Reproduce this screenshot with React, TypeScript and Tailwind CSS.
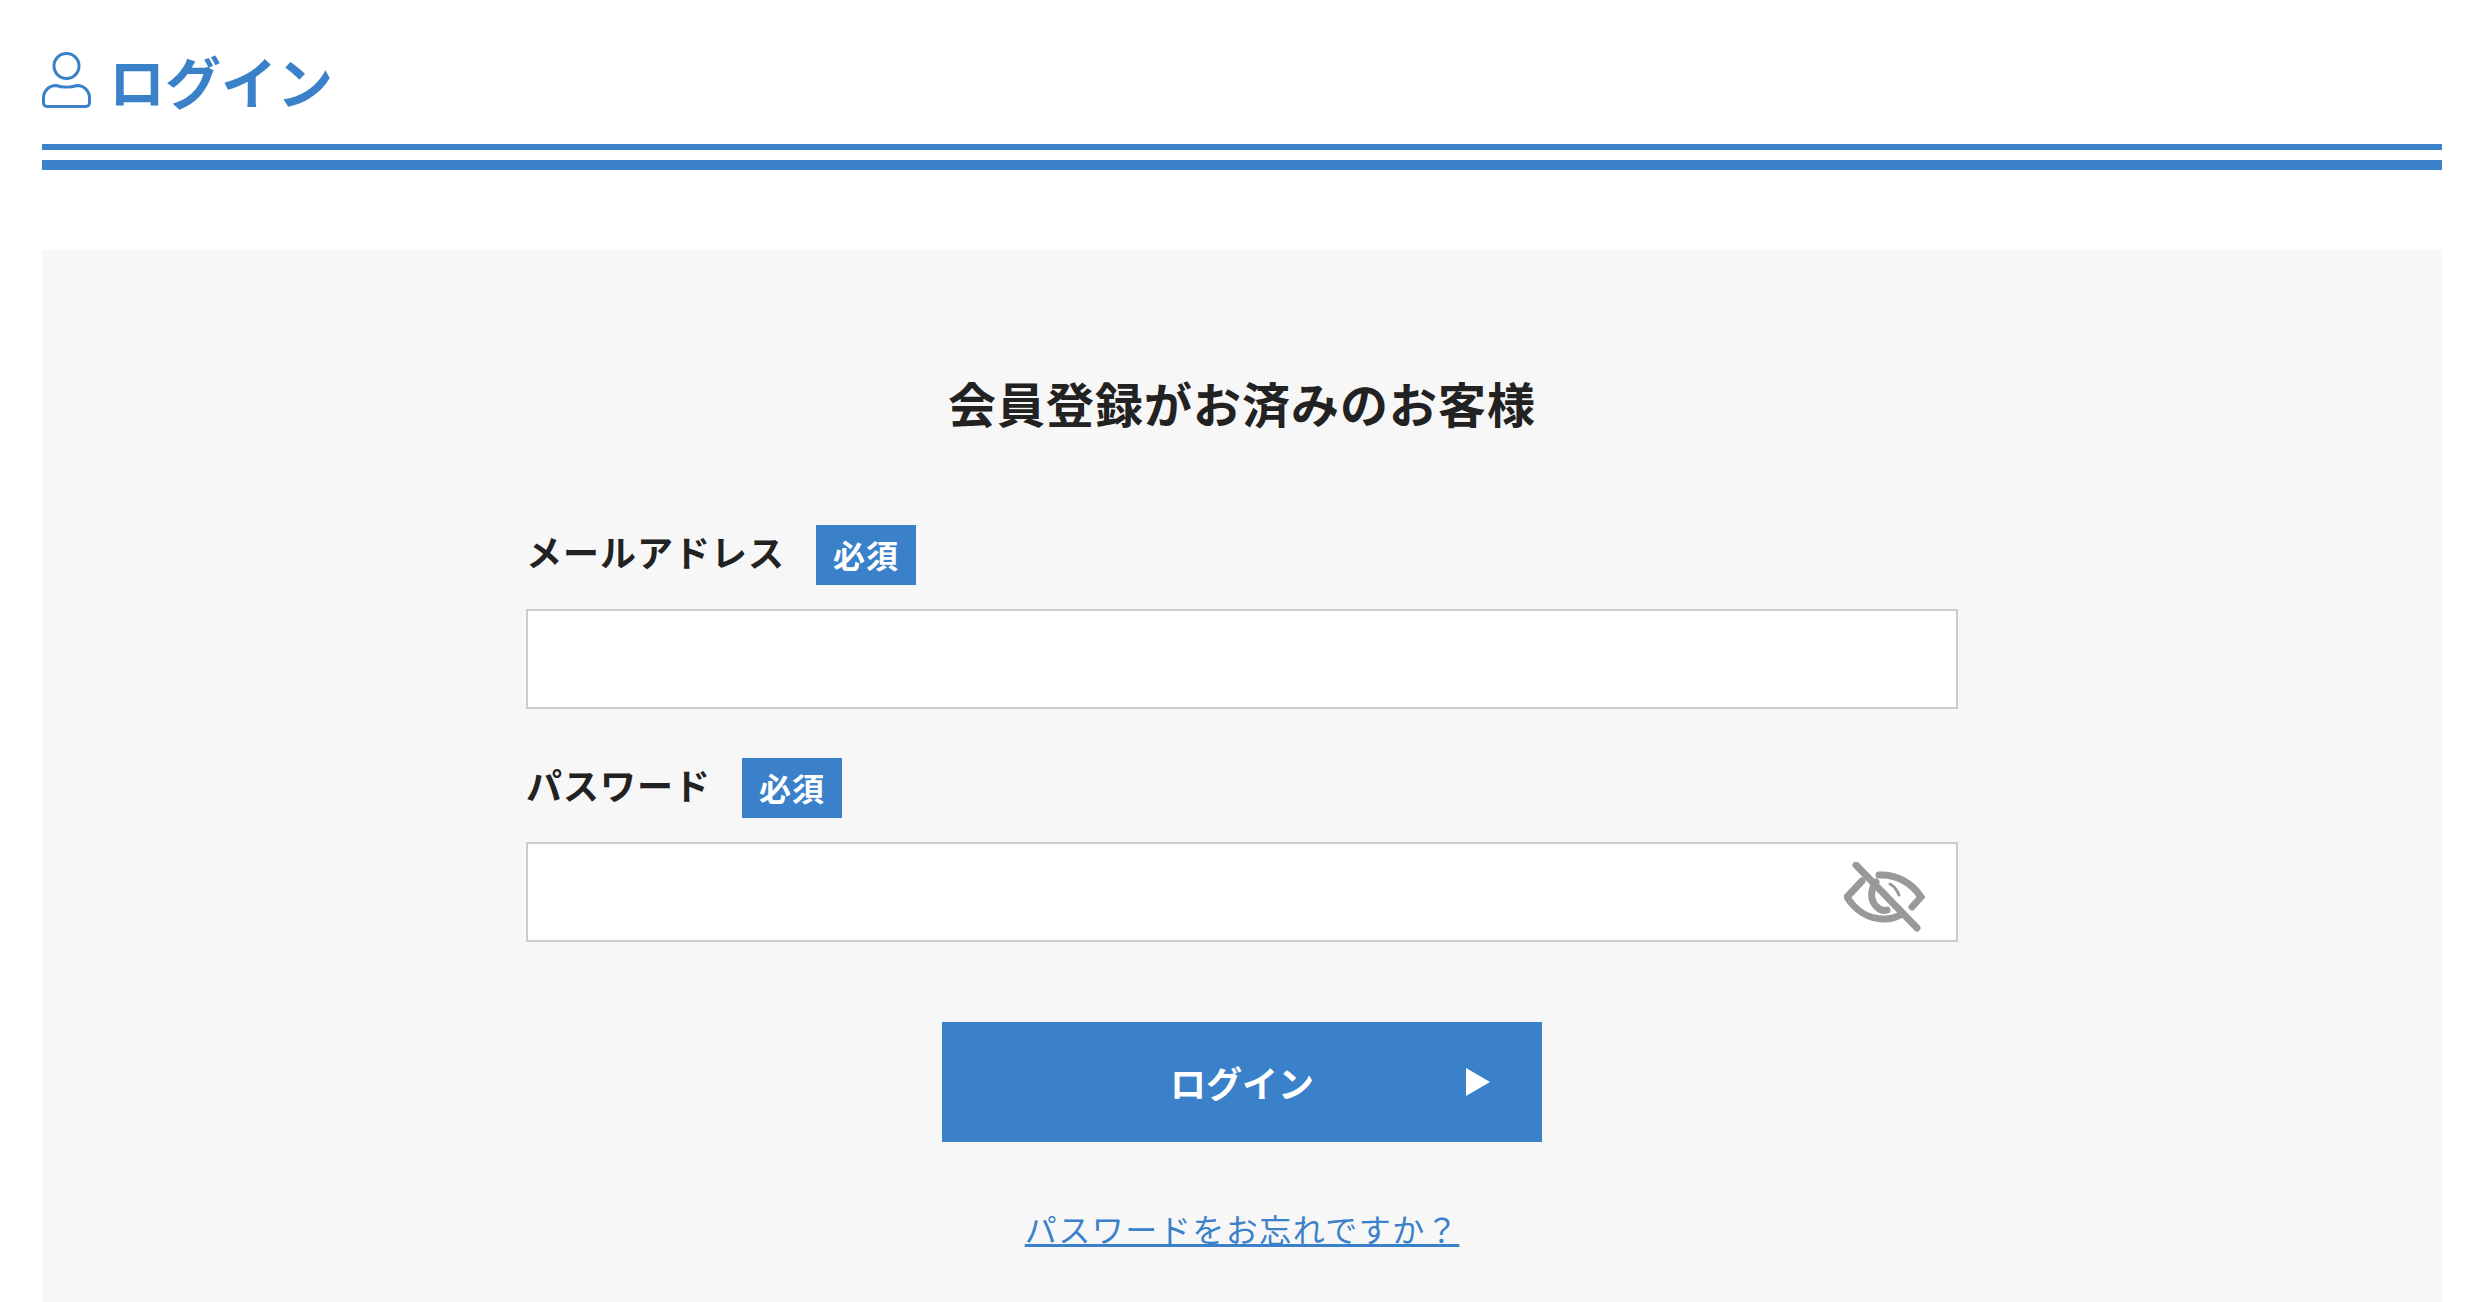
const FONT = "font-['Noto_Sans_CJK_JP','Noto_Sans',sans-serif]";

function UserIcon() {
  return (
    <svg width="49" height="56" viewBox="0 0 49 56" fill="none" stroke="#3b81ca" strokeWidth="3" className="shrink-0">
      <circle cx="24.5" cy="14" r="12.5" />
      <path d="M14 33.5C20 35.5 29 35.5 35 33.5C42 33.5 47.5 39 47.5 46V51C47.5 53 46 54.5 44 54.5H5C3 54.5 1.5 53 1.5 51V46C1.5 39 7 33.5 14 33.5Z" />
    </svg>
  );
}

function EyeOffIcon() {
  return (
    <svg width="81" height="70" viewBox="0 0 81 70" fill="none" stroke="#999" strokeWidth="7" strokeLinecap="round" className="block">
      <path d="M12 3L73 66" />
      <path d="M18 19L3 35C11 48 24 57 40 57C47 57 53 55 58 52" />
      <path d="M35 13C52 12 68 21 77 35L68 45" />
      <path d="M32 20C26 28 26 39 33 45C36 48 40 49 43 48" />
      <path d="M46 22C50 24 53 28 55 33" strokeWidth="3" />
    </svg>
  );
}

function RequiredBadge() {
  return (
    <span className="flex h-[60px] w-[100px] items-center justify-center bg-[#3b81ca] pb-[2px] text-[32px] font-bold tracking-[1px] text-white">
      必須
    </span>
  );
}

function Field({ label, children }: { label: string; children?: React.ReactNode }) {
  return (
    <div>
      <div className="flex items-center gap-[31px]">
        <span className="pb-[8px] text-[36px] font-bold leading-[52px] tracking-[1px] text-[#222]">{label}</span>
        <RequiredBadge />
      </div>
      <div className="relative mt-[24px]">
        <input className="block h-[100px] w-full border-2 border-[#ccc] bg-white px-4 outline-none" />
        {children}
      </div>
    </div>
  );
}

export default function App() {
  return (
    <div className={`h-[1302px] w-full overflow-hidden bg-white pl-[42px] pr-[30px] pt-[48px] ${FONT}`}>
      <h1 className="flex h-[64px] items-center gap-[18px] text-[56px] font-bold leading-none text-[#3b81ca]">
        <UserIcon />
        ログイン
      </h1>
      <div className="mt-[32px] h-[26px] border-t-[6px] border-b-[10px] border-[#3b81ca]" />
      <main className="mt-[80px] h-[1052px] bg-[#f7f7f7] pt-[119px]">
        <h2 className="text-center text-[48px] font-bold leading-[66px] tracking-[1px] text-[#222]">会員登録がお済みのお客様</h2>
        <form className="mx-auto mt-[90px] w-[1432px]">
          <div className="flex flex-col gap-[49px]">
            <Field label="メールアドレス" />
            <Field label="パスワード">
              <span className="absolute right-[33px] top-[20px]">
                <EyeOffIcon />
              </span>
            </Field>
          </div>
          <button type="button" className="relative mx-auto mt-[80px] block h-[120px] w-[600px] bg-[#3b81ca] text-[36px] font-bold text-white">
            ログイン
            <svg width="24" height="28" viewBox="0 0 24 28" className="absolute right-[52px] top-[46px]">
              <path d="M0 0L24 14L0 28Z" fill="#fff" />
            </svg>
          </button>
          <div className="mt-[62px] text-center">
            <a href="#" className="text-[32px] leading-[48px] tracking-[1.5px] text-[#3b81ca] underline">パスワードをお忘れですか？</a>
          </div>
        </form>
      </main>
    </div>
  );
}
